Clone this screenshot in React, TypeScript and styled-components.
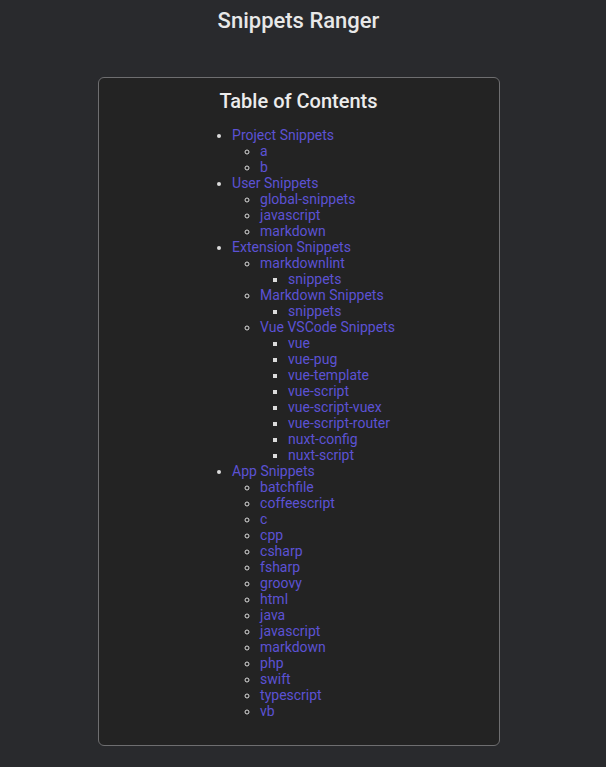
import React from 'react';
import styled, { createGlobalStyle } from 'styled-components';

const GlobalStyle = createGlobalStyle`
  html, body {
    margin: 0;
    padding: 0;
    background: #292a2d;
    color: #e3e3e3;
    font-family: Roboto, 'Noto Sans', sans-serif;
  }
`;

const Page = styled.div`
  width: 597px;
  display: flex;
  flex-direction: column;
  align-items: center;
`;

const Title = styled.h1`
  margin: 8px 0 0;
  font-size: 22px;
  line-height: 26px;
  font-weight: 500;
  color: #e8e8e8;
`;

const TocBox = styled.nav`
  box-sizing: border-box;
  width: 402px;
  margin: 43px 0 23px;
  padding: 11px 0 25px;
  background: #232323;
  border: 1px solid #6e6e70;
  border-radius: 6px;
  text-align: center;
`;

const TocHeading = styled.h2`
  margin: 0 0 14px;
  font-size: 20px;
  line-height: 24px;
  font-weight: 500;
  color: #ececec;
`;

const List = styled.ul<{ $level: number }>`
  display: ${p => (p.$level === 0 ? 'inline-block' : 'block')};
  margin: 0;
  padding: ${p => (p.$level === 0 ? '0 10px 0 40px' : '0 0 0 28px')};
  text-align: left;
  list-style-type: ${p => ['disc', 'circle', 'square'][p.$level]};
  font-size: 14px;
  line-height: 16px;
  color: #dcdcdc;
`;

const Item = styled.li``;

const Link = styled.a`
  color: #5c52d4;
  text-decoration: none;
`;

type Node = { name: string; children?: Node[] };

const toc: Node[] = [
  { name: 'Project Snippets', children: [{ name: 'a' }, { name: 'b' }] },
  {
    name: 'User Snippets',
    children: [{ name: 'global-snippets' }, { name: 'javascript' }, { name: 'markdown' }],
  },
  {
    name: 'Extension Snippets',
    children: [
      { name: 'markdownlint', children: [{ name: 'snippets' }] },
      { name: 'Markdown Snippets', children: [{ name: 'snippets' }] },
      {
        name: 'Vue VSCode Snippets',
        children: [
          'vue',
          'vue-pug',
          'vue-template',
          'vue-script',
          'vue-script-vuex',
          'vue-script-router',
          'nuxt-config',
          'nuxt-script',
        ].map(name => ({ name })),
      },
    ],
  },
  {
    name: 'App Snippets',
    children: [
      'batchfile',
      'coffeescript',
      'c',
      'cpp',
      'csharp',
      'fsharp',
      'groovy',
      'html',
      'java',
      'javascript',
      'markdown',
      'php',
      'swift',
      'typescript',
      'vb',
    ].map(name => ({ name })),
  },
];

const TocList: React.FC<{ nodes: Node[]; level: number }> = ({ nodes, level }) => (
  <List $level={level}>
    {nodes.map((node, i) => (
      <Item key={node.name + i}>
        <Link href={`#${node.name.toLowerCase().replace(/\s+/g, '-')}`}>{node.name}</Link>
        {node.children && <TocList nodes={node.children} level={level + 1} />}
      </Item>
    ))}
  </List>
);

const App: React.FC = () => (
  <>
    <GlobalStyle />
    <Page>
      <Title>Snippets Ranger</Title>
      <TocBox>
        <TocHeading>Table of Contents</TocHeading>
        <TocList nodes={toc} level={0} />
      </TocBox>
    </Page>
  </>
);

export default App;
